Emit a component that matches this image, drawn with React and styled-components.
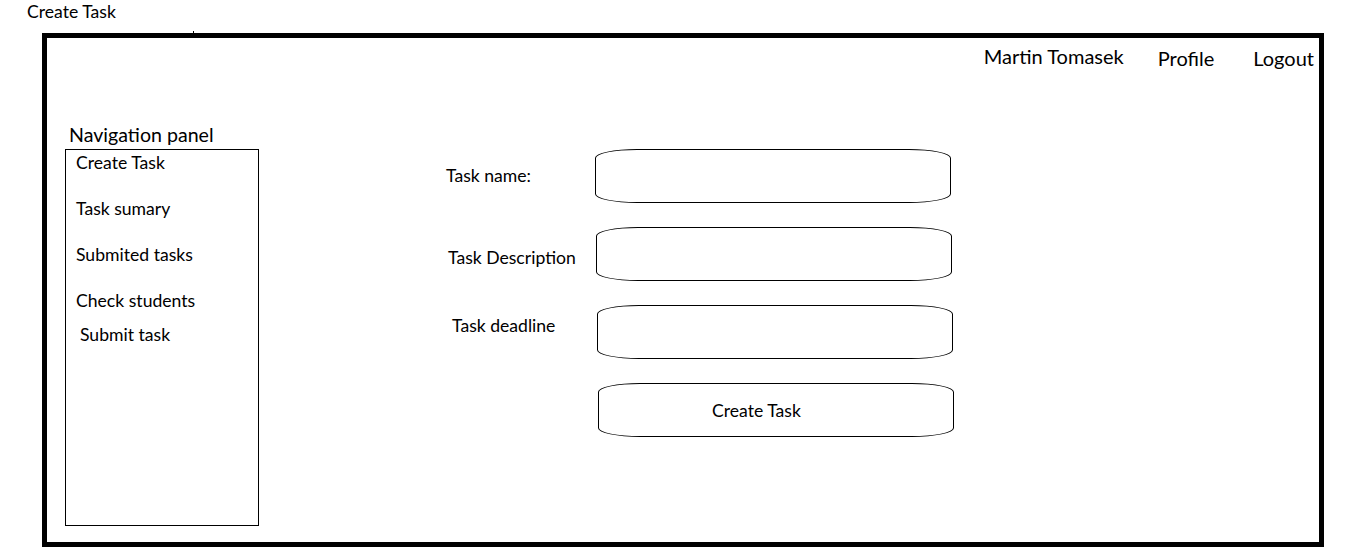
import React from "react";
import styled, { createGlobalStyle } from "styled-components";

const Global = createGlobalStyle`
  html, body { margin: 0; padding: 0; background: #fff; }
  body { font-family: Lato, "Open Sans", sans-serif; color: #000; }
`;

const Page = styled.div`
  width: 1355px;
  height: 552px;
  display: flex;
  flex-direction: column;
`;

const PageTitle = styled.div`
  font-size: 17.6px;
  line-height: 20px;
  padding: 2px 0 0 27px;
  height: 33px;
  box-sizing: border-box;
`;

const Frame = styled.div`
  position: relative;
  margin-left: 42px;
  width: 1282px;
  height: 514px;
  box-sizing: border-box;
  border: 5px solid #000;
  display: flex;
  flex-direction: column;
  &::before {
    content: "";
    position: absolute;
    left: 146px;
    top: -7px;
    width: 1px;
    height: 2px;
    background: #000;
  }
`;

const Header = styled.div`
  display: flex;
  justify-content: flex-end;
  align-items: flex-start;
  padding: 6px 5px 0 0;
  height: 60px;
  box-sizing: border-box;
`;

const HeaderLink = styled.span`
  font-size: 20px;
  line-height: 24px;
  margin-top: ${(p) => p.$dy || 0}px;
  margin-left: ${(p) => p.$gap || 0}px;
`;

const Body = styled.div`
  display: flex;
  align-items: flex-start;
  flex: 1;
`;

const Sidebar = styled.div`
  display: flex;
  flex-direction: column;
  margin-left: 18px;
  margin-top: 25px;
`;

const SidebarTitle = styled.div`
  font-size: 19.6px;
  line-height: 22px;
  padding: 1px 0 0 4px;
  height: 26px;
  box-sizing: border-box;
`;

const NavBox = styled.div`
  width: 194px;
  height: 377px;
  box-sizing: border-box;
  border: 1px solid #000;
  display: flex;
  flex-direction: column;
  padding: 3px 0 0 10px;
`;

const NavItem = styled.div`
  font-size: 17.6px;
  line-height: 20px;
  margin-top: ${(p) => p.$gap || 0}px;
  padding-left: ${(p) => p.$indent || 0}px;
`;

const Form = styled.div`
  display: grid;
  grid-template-columns: 149px 360px;
  row-gap: 24px;
  margin-left: 187px;
  margin-top: 51px;
`;

const Label = styled.div`
  align-self: center;
  font-size: 17.6px;
  line-height: 20px;
  padding-left: ${(p) => p.$indent || 0}px;
  transform: translateY(${(p) => p.$dy || 0}px);
`;

const Field = styled.div`
  width: 356px;
  height: 54px;
  box-sizing: border-box;
  border: 1px solid #000;
  border-radius: 42px / 9px;
  margin-left: ${(p) => p.$shift || 0}px;
  background: #fff;
`;

const Button = styled.button`
  grid-column: 2;
  width: 356px;
  height: 54px;
  box-sizing: border-box;
  border: 1px solid #000;
  border-radius: 42px / 9px;
  margin-left: ${(p) => p.$shift || 0}px;
  background: #fff;
  font-family: inherit;
  font-size: 17.6px;
  color: #000;
  text-align: left;
  padding: 0 0 0 113px;
  cursor: pointer;
`;

export default function App() {
  return (
    <Page>
      <Global />
      <PageTitle>Create Task</PageTitle>
      <Frame>
        <Header>
          <HeaderLink>Martin Tomasek</HeaderLink>
          <HeaderLink $gap={34} $dy={2}>Profile</HeaderLink>
          <HeaderLink $gap={39} $dy={2}>Logout</HeaderLink>
        </Header>
        <Body>
          <Sidebar>
            <SidebarTitle>Navigation panel</SidebarTitle>
            <NavBox>
              <NavItem>Create Task</NavItem>
              <NavItem $gap={26}>Task sumary</NavItem>
              <NavItem $gap={26}>Submited tasks</NavItem>
              <NavItem $gap={26}>Check students</NavItem>
              <NavItem $gap={14} $indent={4}>Submit task</NavItem>
            </NavBox>
          </Sidebar>
          <Form>
            <Label>Task name:</Label>
            <Field />
            <Label $indent={2} $dy={4}>Task Description</Label>
            <Field $shift={1} />
            <Label $indent={6} $dy={-6}>Task deadline</Label>
            <Field $shift={2} />
            <Button $shift={3}>Create Task</Button>
          </Form>
        </Body>
      </Frame>
    </Page>
  );
}
